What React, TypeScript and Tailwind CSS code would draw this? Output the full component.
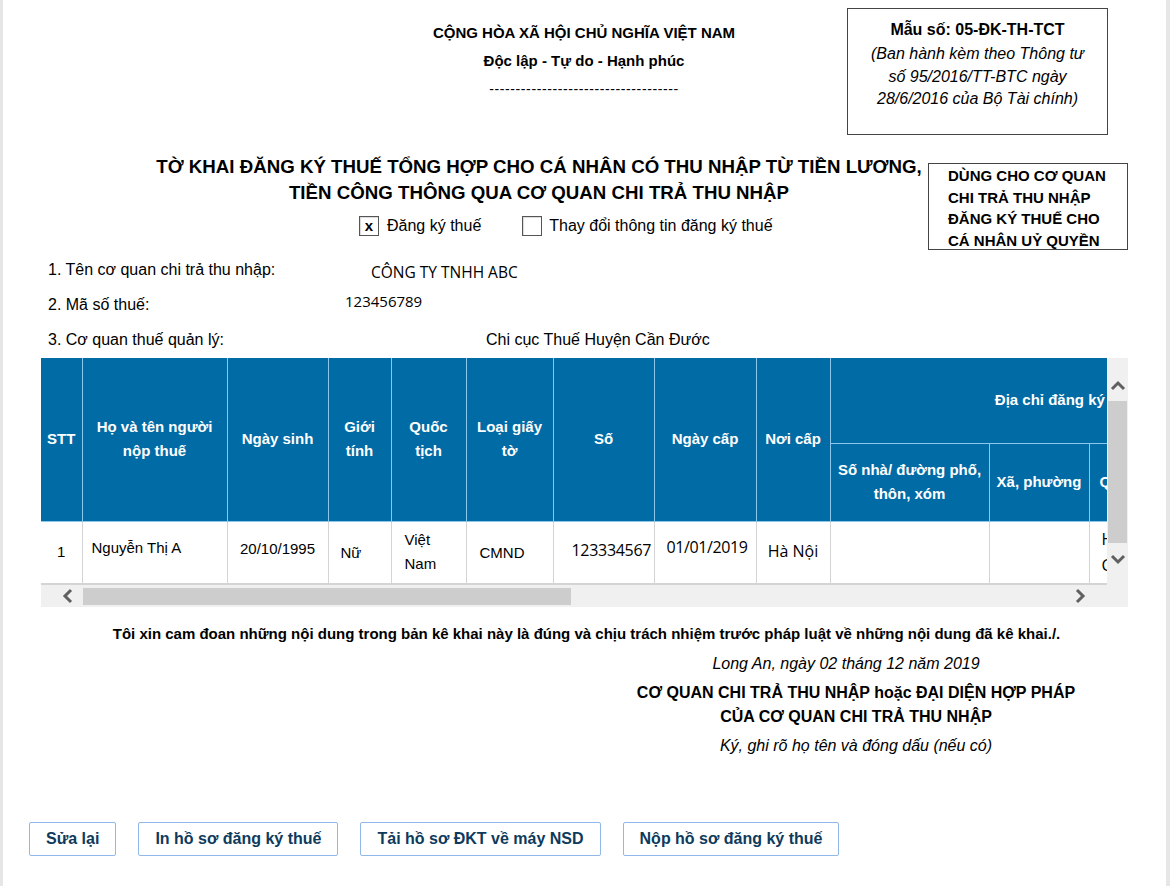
import React from "react";

const sans = { fontFamily: '"Liberation Sans", Arial, sans-serif' };
const calibriLike = { fontFamily: '"Open Sans", sans-serif' };

function Chevron({ dir }: { dir: "up" | "down" | "left" | "right" }) {
  const pts: Record<string, string> = {
    up: "2,10 8,4 14,10",
    down: "2,4 8,10 14,4",
    left: "10,2 4,8 10,14",
    right: "4,2 10,8 4,14",
  };
  const vertical = dir === "up" || dir === "down";
  return (
    <svg
      width={vertical ? 16 : 14}
      height={vertical ? 14 : 16}
      viewBox={vertical ? "0 0 16 14" : "0 0 14 16"}
    >
      <polyline
        points={pts[dir]}
        fill="none"
        stroke="#606060"
        strokeWidth="3"
        strokeLinejoin="miter"
      />
    </svg>
  );
}

function CheckBox({ checked }: { checked?: boolean }) {
  return (
    <div className="w-[20px] h-[20px] border border-[#555] bg-white flex items-center justify-center shadow-[inset_1px_1px_1px_rgba(0,0,0,0.15)]">
      {checked && <span className="text-[15px] font-bold leading-none text-black -mt-[1px]">x</span>}
    </div>
  );
}

const th =
  "bg-[#016ba5] text-white font-bold text-[15px] leading-[24px] text-center align-middle border border-[#8cc6ea] px-1";
const td = "border border-[#d4d4d4] align-middle text-[15px] text-black";

export default function App() {
  return (
    <div className="w-[1170px] h-[886px] bg-white flex overflow-hidden" style={sans}>
      <div className="w-[3px] bg-[#e6e6e6]" />
      <div className="flex-1 flex flex-col text-black">
        {/* national header + form code */}
        <div className="flex pt-[8px]">
          <div className="ml-[381px] w-[400px] mt-[11px] text-center text-[15px] font-bold leading-[28px]">
            <div>CỘNG HÒA XÃ HỘI CHỦ NGHĨA VIỆT NAM</div>
            <div>Độc lập - Tự do - Hạnh phúc</div>
            <div className="font-normal text-[14px] tracking-[0.6px]">------------------------------------</div>
          </div>
          <div className="ml-[63px] w-[261px] h-[127px] border border-[#444] text-center pt-[10px]">
            <div className="text-[16px] font-bold leading-[22px]">Mẫu số: 05-ĐK-TH-TCT</div>
            <div className="text-[16px] italic leading-[22.5px] mt-[2px]">
              (Ban hành kèm theo Thông tư
              <br />
              số 95/2016/TT-BTC ngày
              <br />
              28/6/2016 của Bộ Tài chính)
            </div>
          </div>
        </div>

        {/* title + usage box */}
        <div className="flex mt-[19px]">
          <div className="ml-[147px] w-[778px]">
            <div className="text-center text-[18.7px] font-bold leading-[26px] whitespace-nowrap">
              TỜ KHAI ĐĂNG KÝ THUẾ TỔNG HỢP CHO CÁ NHÂN CÓ THU NHẬP TỪ TIỀN LƯƠNG,
              <br />
              TIỀN CÔNG THÔNG QUA CƠ QUAN CHI TRẢ THU NHẬP
            </div>
            <div className="flex items-center h-[20px] mt-[10px] pl-[209px] text-[16px]">
              <CheckBox checked />
              <span className="ml-[8px]">Đăng ký thuế</span>
              <div className="ml-[41px]">
                <CheckBox />
              </div>
              <span className="ml-[7px]">Thay đổi thông tin đăng ký thuế</span>
            </div>
          </div>
          <div className="mt-[9px] w-[200px] h-[87px] border border-[#444] pl-[19px] pt-[1px] text-[15px] font-bold leading-[21.5px] whitespace-nowrap">
            <div>DÙNG CHO CƠ QUAN</div>
            <div>CHI TRẢ THU NHẬP</div>
            <div>ĐĂNG KÝ THUẾ CHO</div>
            <div>CÁ NHÂN UỶ QUYỀN</div>
          </div>
        </div>

        {/* general info */}
        <div className="ml-[45px] mt-[2px] text-[16px]">
          <div className="flex items-center h-[35px]">
            <span className="w-[323px]">1. Tên cơ quan chi trả thu nhập:</span>
            <span className="mt-[7px] text-[15.5px]" style={calibriLike}>
              CÔNG TY TNHH ABC
            </span>
          </div>
          <div className="flex items-center h-[35px]">
            <span className="w-[297px]">2. Mã số thuế:</span>
            <span className="mb-[6px] text-[15px]" style={calibriLike}>
              123456789
            </span>
          </div>
          <div className="flex items-center h-[35px]">
            <span className="w-[438px]">3. Cơ quan thuế quản lý:</span>
            <span>Chi cục Thuế Huyện Cần Đước</span>
          </div>
        </div>

        {/* employee table with scrollbars */}
        <div className="ml-[38px] mt-[1px] w-[1087px] grid grid-cols-[1066px_21px] grid-rows-[226px_23px]">
          <div className="overflow-hidden">
            <table className="table-fixed border-collapse w-[1588px]">
              <colgroup>
                <col className="w-[41px]" />
                <col className="w-[145px]" />
                <col className="w-[101px]" />
                <col className="w-[63px]" />
                <col className="w-[75px]" />
                <col className="w-[87px]" />
                <col className="w-[101px]" />
                <col className="w-[102px]" />
                <col className="w-[74px]" />
                <col className="w-[159px]" />
                <col className="w-[100px]" />
                <col className="w-[120px]" />
                <col className="w-[143px]" />
                <col className="w-[130px]" />
                <col className="w-[147px]" />
              </colgroup>
              <thead>
                <tr className="h-[85px]">
                  <th rowSpan={2} className={th + " border-l-0 border-t-0 px-0"}>STT</th>
                  <th rowSpan={2} className={th + " border-t-0"}>Họ và tên người<br />nộp thuế</th>
                  <th rowSpan={2} className={th + " border-t-0"}>Ngày sinh</th>
                  <th rowSpan={2} className={th + " border-t-0"}>Giới<br />tính</th>
                  <th rowSpan={2} className={th + " border-t-0"}>Quốc<br />tịch</th>
                  <th rowSpan={2} className={th + " border-t-0"}>Loại giấy<br />tờ</th>
                  <th rowSpan={2} className={th + " border-t-0"}>Số</th>
                  <th rowSpan={2} className={th + " border-t-0"}>Ngày cấp</th>
                  <th rowSpan={2} className={th + " border-t-0"}>Nơi cấp</th>
                  <th colSpan={4} className={th + " border-t-0"}>Địa chỉ đăng ký thường trú</th>
                  <th rowSpan={2} className={th + " border-t-0"}>Điện thoại</th>
                  <th rowSpan={2} className={th + " border-t-0"}>Email</th>
                </tr>
                <tr className="h-[78px]">
                  <th className={th + " px-0"}>Số nhà/ đường phố,<br />thôn, xóm</th>
                  <th className={th + " px-0"}>Xã, phường</th>
                  <th className={th + " text-left pl-[10px]"}>Quận/huyện</th>
                  <th className={th}>Tỉnh/thành phố</th>
                </tr>
              </thead>
              <tbody>
                <tr className="h-[62px]">
                  <td className={td + " border-l-0 text-center"}>1</td>
                  <td className={td + " pl-[9px] pb-[7px]"}>Nguyễn Thị A</td>
                  <td className={td + " text-center pb-[5px]"}>20/10/1995</td>
                  <td className={td + " pl-[12px] pt-[2px]"}>Nữ</td>
                  <td className={td + " pl-[13px] leading-[24px]"}>Việt<br />Nam</td>
                  <td className={td + " pl-[13px] pt-[2px]"}>CMND</td>
                  <td className={td + " pl-[18px] text-[16px] pb-[4px]"} style={calibriLike}>
                    <span className="tracking-[-0.3px]">123334567</span>
                  </td>
                  <td className={td + " pl-[12px] text-[16px] pb-[10px]"} style={calibriLike}>
                    <span className="tracking-[-0.4px]">01/01/2019</span>
                  </td>
                  <td className={td + " text-center text-[16px] pb-[3px]"} style={calibriLike}>
                    Hà Nội
                  </td>
                  <td className={td}></td>
                  <td className={td}></td>
                  <td className={td + " pl-[12px] text-[16px] leading-[26px]"} style={calibriLike}>
                    Huyện<br />Cần Đước
                  </td>
                  <td className={td + " text-center text-[16px]"} style={calibriLike}>
                    Long An
                  </td>
                  <td className={td}></td>
                  <td className={td}></td>
                </tr>
              </tbody>
            </table>
          </div>

          {/* vertical scrollbar */}
          <div className="row-span-2 bg-[#f0f0f0] flex flex-col items-center">
            <div className="h-[43px] flex items-center justify-center pt-[12px]">
              <Chevron dir="up" />
            </div>
            <div className="w-[19px] h-[142px] bg-[#cdcdcd]" />
            <div className="h-[30px] flex items-center justify-center pt-[1px]">
              <Chevron dir="down" />
            </div>
          </div>

          {/* horizontal scrollbar */}
          <div className="bg-[#f0f0f0] border-t border-[#d4d4d4] flex items-center">
            <div className="w-[42px] flex justify-center pl-[12px]">
              <Chevron dir="left" />
            </div>
            <div className="w-[488px] h-[17px] bg-[#cdcdcd]" />
            <div className="ml-auto w-[42px] flex justify-center pr-[12px]">
              <Chevron dir="right" />
            </div>
          </div>
        </div>

        {/* declaration + signature */}
        <div className="mt-[18px] text-center text-[15px] font-bold leading-[18px] pl-[4px] whitespace-nowrap">
          Tôi xin cam đoan những nội dung trong bản kê khai này là đúng và chịu trách nhiệm trước pháp luật về những nội dung đã kê khai./.
        </div>
        <div className="ml-[603px] w-[500px] text-center mt-[12px]">
          <div className="text-[16px] italic leading-[18px] pr-[20px]">Long An, ngày 02 tháng 12 năm 2019</div>
          <div className="text-[16px] font-bold leading-[24px] mt-[8px]">
            CƠ QUAN CHI TRẢ THU NHẬP hoặc ĐẠI DIỆN HỢP PHÁP
            <br />
            CỦA CƠ QUAN CHI TRẢ THU NHẬP
          </div>
          <div className="text-[16px] italic leading-[18px] mt-[8px]">Ký, ghi rõ họ tên và đóng dấu (nếu có)</div>
        </div>

        {/* actions */}
        <div className="flex gap-[22px] ml-[26px] mt-[67px]">
          {["Sửa lại", "In hồ sơ đăng ký thuế", "Tải hồ sơ ĐKT về máy NSD", "Nộp hồ sơ đăng ký thuế"].map((label) => (
            <button
              key={label}
              className="h-[34px] px-[16px] border border-[#90b8ea] rounded-[2px] bg-white text-[#0e3a5c] text-[16px] font-bold"
              style={sans}
            >
              {label}
            </button>
          ))}
        </div>
      </div>
      <div className="w-[4px] bg-[#e6e6e6]" />
    </div>
  );
}
